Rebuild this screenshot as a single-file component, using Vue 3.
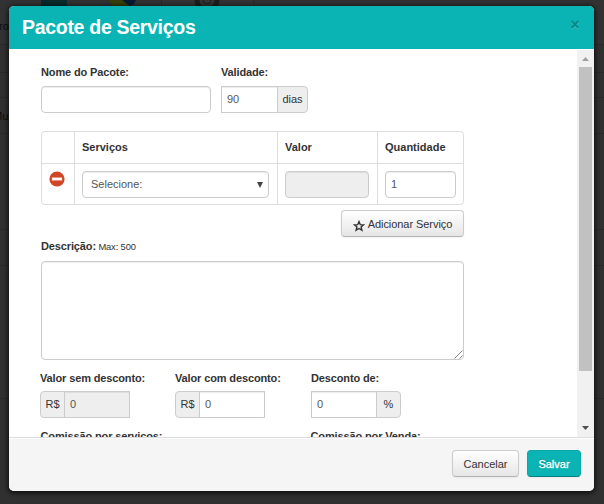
<script setup>
import { ref } from 'vue'

const packageName = ref('')
const days = ref('90')
const quantity = ref('1')
const description = ref('')
const full = ref('0')
const discounted = ref('0')
const discount = ref('0')
</script>

<template>
  <div class="page">
    <svg class="backdrop" width="604" height="504" viewBox="0 0 604 504">
      <rect width="604" height="504" fill="#303030" />
      <rect width="604" height="44" fill="#323232" />
      <rect x="161" width="92" height="6" fill="#343434" />
      <rect x="41" width="26" height="6" fill="#0b2a2b" />
      <path d="M109 0h14l7 6h-17z" fill="#38400a" />
      <path d="M122 0h14l-2 4-4 2z" fill="#071a32" />
      <circle cx="207" cy="0" r="10" fill="none" stroke="#1c1c1c" stroke-width="5" />
      <circle cx="207" cy="0" r="4" fill="none" stroke="#1c1c1c" />
      <path d="M0 44.5H604M0 72.5H604M0 97.5H604M0 133.5H604M0 229.5H604M0 265.5H604M0 398.5H604M161.500 0V6M253.500 0V6" stroke="#292929" fill="none" />
      <text x="-1" y="30" class="ghost">ro</text>
      <text x="-7" y="120" class="ghost">Mu</text>
    </svg>

    <section class="modal">
      <header class="head">
        <h3>Pacote de Serviços</h3>
        <button class="close" type="button">×</button>
      </header>

      <div class="body">
        <div class="content">
          <div class="row first">
            <div class="field name">
              <label>Nome do Pacote:</label>
              <input v-model="packageName" class="control" />
            </div>
            <div class="field">
              <label>Validade:</label>
              <div class="group append validity">
                <input v-model="days" class="control" />
                <span class="addon">dias</span>
              </div>
            </div>
          </div>

          <div class="table">
            <div class="tr th">
              <div class="td"></div>
              <div class="td">Serviços</div>
              <div class="td">Valor</div>
              <div class="td">Quantidade</div>
            </div>
            <div class="tr services">
              <div class="td remove">
                <svg width="16" height="16" viewBox="0 0 16 16">
                  <circle cx="8" cy="8" r="7.600" fill="#d04526" />
                  <rect x="3" y="6.500" width="10" height="3" fill="#fff" stroke="#e58a75" stroke-width=".5" />
                </svg>
              </div>
              <div class="td">
                <div class="control select">
                  <span>Selecione:</span>
                  <svg width="6" height="6" viewBox="0 0 6 6"><path d="M0 0h6L3 6z" fill="#444" /></svg>
                </div>
              </div>
              <div class="td"><input class="control" disabled /></div>
              <div class="td"><input v-model="quantity" class="control" /></div>
            </div>
          </div>

          <div class="actions">
            <button class="btn add" type="button">
              <svg width="12" height="12" viewBox="0 0 12 12">
                <path d="M6 1.600 7.300 4.700 10.500 4.900 8.100 7 8.900 10.200 6 8.500 3.100 10.200 3.900 7 1.500 4.900 4.700 4.700z" fill="none" stroke="#333" stroke-width="1.400" />
              </svg>
              <span>Adicionar Serviço</span>
            </button>
          </div>

          <label class="desc">Descrição: <small>Max: 500</small></label>
          <div class="area">
            <textarea v-model="description" class="control"></textarea>
            <svg class="grip" width="9" height="9" viewBox="0 0 9 9">
              <path d="M.5 8.500 8.500.5M5.500 8.500 8.500 5.500" stroke="#666" stroke-width=".8" fill="none" />
            </svg>
          </div>

          <div class="row prices">
            <div class="field">
              <label>Valor sem desconto:</label>
              <div class="group prepend">
                <span class="addon">R$</span>
                <input v-model="full" class="control" disabled />
              </div>
            </div>
            <div class="field">
              <label>Valor com desconto:</label>
              <div class="group prepend">
                <span class="addon">R$</span>
                <input v-model="discounted" class="control" />
              </div>
            </div>
            <div class="field">
              <label>Desconto de:</label>
              <div class="group append percent">
                <input v-model="discount" class="control" />
                <span class="addon">%</span>
              </div>
            </div>
          </div>

          <div class="row commissions">
            <label>Comissão por serviços:</label>
            <label>Comissão por Venda:</label>
          </div>
        </div>

        <div class="scrollbar">
          <svg width="17" height="17" viewBox="0 0 17 17"><path d="M5 11h7L8.500 7z" fill="#a0a0a0" /></svg>
          <div class="thumb"></div>
          <svg width="17" height="17" viewBox="0 0 17 17"><path d="M5 6h7L8.500 10z" fill="#505050" /></svg>
        </div>
      </div>

      <footer class="foot">
        <button class="btn cancel" type="button">Cancelar</button>
        <button class="btn save" type="button">Salvar</button>
      </footer>
    </section>
  </div>
</template>

<style>
body {
  margin: 0;
  overflow: hidden;
}
</style>

<style scoped>
* {
  box-sizing: border-box;
}
.page {
  position: relative;
  width: 604px;
  height: 504px;
  padding: 6px 10px 13px 9px;
  overflow: hidden;
  font: 11px/20px "Liberation Sans", Arial, sans-serif;
  color: #333;
}
.backdrop {
  position: absolute;
  inset: 0;
}
.ghost {
  font: 11px "Liberation Sans", Arial, sans-serif;
  fill: #0c0c0c;
}
.modal {
  position: relative;
  display: flex;
  flex-direction: column;
  width: 585px;
  height: 485px;
  border-radius: 5px;
  background: #fff;
  overflow: hidden;
  box-shadow: 0 1px 5px 1px rgba(0, 0, 0, 0.75);
}
.head {
  display: flex;
  justify-content: space-between;
  height: 43px;
  padding: 0 14px 0 13px;
  background: #0bb4b4;
}
h3 {
  margin: 0;
  font-size: 19.5px;
  line-height: 42px;
  letter-spacing: -0.3px;
  color: #fff;
}
.close {
  width: 10px;
  height: 37px;
  padding: 0;
  border: 0;
  background: none;
  font: bold 16px/37px "Liberation Sans", Arial, sans-serif;
  color: #088686;
  text-shadow: 0 1px 0 #3cc3c3;
}
.body {
  display: flex;
  height: 388px;
  overflow: hidden;
}
.content {
  width: 568px;
  padding: 13px 0 0 32px;
}
label {
  display: block;
  height: 20px;
  font-weight: bold;
  letter-spacing: -0.13px;
  white-space: nowrap;
}
.row {
  display: flex;
}
.first {
  gap: 10px;
}
.name {
  width: 170px;
}
.control {
  display: block;
  width: 100%;
  height: 27px;
  padding: 0 5px 2px;
  border: 1px solid #ccc;
  border-radius: 4px;
  outline: 0;
  background: #fff;
  box-shadow: inset 0 1px 1px rgba(0, 0, 0, 0.075);
  font: 11px/23px "Liberation Sans", Arial, sans-serif;
  color: #555;
}
.control:disabled {
  background: #eee;
}
.field .control,
.field .group {
  margin-top: 4px;
}
.group {
  display: flex;
}
.field .group .control {
  margin-top: 0;
}
.addon {
  flex: none;
  height: 27px;
  border: 1px solid #ccc;
  background: #eee;
  line-height: 25px;
  text-align: center;
}
.append .control {
  border-radius: 0;
}
.append .addon {
  margin-left: -1px;
  border-radius: 0 4px 4px 0;
}
.prepend {
  width: 90px;
}
.prepend .addon {
  width: 25px;
  margin-right: -1px;
  border-radius: 4px 0 0 4px;
}
.prepend .control {
  border-radius: 0;
}
.validity {
  width: 87px;
}
.validity .addon {
  width: 31px;
}
.percent {
  width: 90px;
}
.percent .addon {
  width: 25px;
}
.table {
  width: 423px;
  height: 74px;
  margin-top: 18px;
  border: 1px solid #ddd;
  border-radius: 4px;
}
.tr {
  display: grid;
  grid-template-columns: 32px 203px 100px 86px;
}
.th {
  height: 31px;
  font-weight: bold;
  line-height: 31px;
}
.services {
  height: 41px;
  border-top: 1px solid #ddd;
}
.td {
  padding: 0 7px;
  border-left: 1px solid #ddd;
}
.td:first-child {
  border-left: 0;
}
.services .td {
  padding-top: 7px;
}
.services .td:nth-child(2),
.services .td:nth-child(3) {
  padding-right: 8px;
}
.select {
  display: flex;
  align-items: center;
  justify-content: space-between;
  padding: 0 5px 0 8px;
}
.services .td.remove {
  padding: 7px 0 0 7px;
}
.remove svg {
  display: block;
}
.actions {
  display: flex;
  justify-content: flex-end;
  width: 423px;
  margin-top: 5px;
}
.btn {
  display: flex;
  align-items: center;
  justify-content: center;
  height: 27px;
  padding: 0;
  border: 1px solid #ccc;
  border-bottom-color: #b3b3b3;
  border-radius: 4px;
  background: linear-gradient(#fff, #e6e6e6);
  box-shadow: 0 1px 2px rgba(0, 0, 0, 0.05);
  font: 11px/25px "Liberation Sans", Arial, sans-serif;
  color: #333;
}
.add {
  width: 123px;
  gap: 3px;
  letter-spacing: -0.06px;
}
.add span {
  padding-top: 1px;
}
.add svg {
  margin-top: 4px;
}
.cancel,
.save {
  padding-top: 1px;
}
.desc {
  height: 24px;
  line-height: 18px;
}
small {
  margin-left: -0.5px;
  font-size: 9.35px;
  font-weight: normal;
}
.area {
  position: relative;
  width: 423px;
  height: 99px;
}
textarea.control {
  height: 99px;
  resize: none;
}
.grip {
  position: absolute;
  right: 1px;
  bottom: 1px;
}
.prices {
  margin: 8px 0 0 -1px;
  height: 50px;
}
.prices .field {
  width: 135px;
}
.prices .field:last-child {
  padding-left: 1px;
}
.prices .group {
  margin-top: 3px;
}
.commissions {
  margin: 8px 0 0 -0.5px;
}
.commissions label {
  flex: none;
  width: 270px;
}
.scrollbar {
  display: flex;
  flex: none;
  flex-direction: column;
  width: 17px;
  height: 387px;
  margin-top: 1px;
  background: #f1f1f1;
}
.scrollbar svg {
  flex: none;
}
.thumb {
  width: 13px;
  height: 304px;
  margin: 0 2px 49px;
  background: #c1c1c1;
}
.foot {
  display: flex;
  justify-content: flex-end;
  gap: 8px;
  height: 54px;
  padding: 12px 13px 0;
  border-top: 1px solid #ddd;
  background: #f5f5f5;
  box-shadow: inset 0 1px 0 #fff;
}
.cancel {
  width: 67px;
}
.save {
  width: 54px;
  border-color: #0aa8a8;
  border-bottom-color: #088080;
  background: #0bb4b4;
  color: #fff;
  text-shadow: 0 -1px 0 rgba(0, 0, 0, 0.25);
  -webkit-text-stroke: 0.3px #fff;
}
</style>
